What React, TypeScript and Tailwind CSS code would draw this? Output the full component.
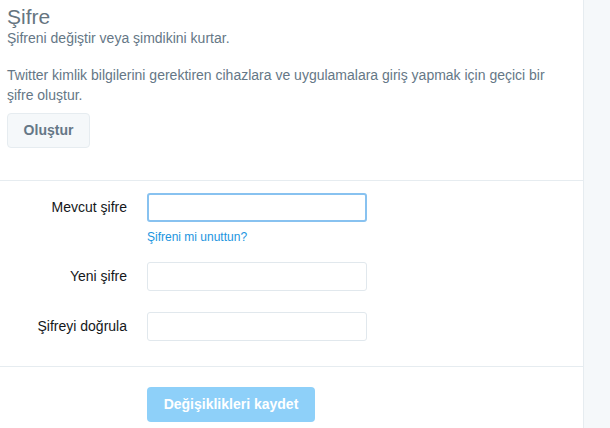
import React from "react";

export default function App() {
  const font = { fontFamily: '"Liberation Sans", Arial, sans-serif' };
  return (
    <div className="flex h-[428px] w-[610px] overflow-hidden bg-white" style={font}>
      <div className="w-[584px] shrink-0 border-r border-[#e6ecf0] bg-white">
        <div className="px-[7px] pt-[5px] pb-[32px]">
          <h1 className="text-[21px] leading-[23px] text-[#66757f]">Şifre</h1>
          <p className="text-[14px] leading-[20px] text-[#657786]">Şifreni değiştir veya şimdikini kurtar.</p>
          <p className="mt-[17px] text-[14px] leading-[20px] text-[#657786] pr-[30px]">
            Twitter kimlik bilgilerini gerektiren cihazlara ve uygulamalara giriş yapmak için geçici bir şifre oluştur.
          </p>
          <button className="mt-[8px] h-[35px] w-[83px] rounded-[4px] border border-[#e6ecf0] bg-[#f5f8fa] text-[14px] font-bold text-[#657786]">
            Oluştur
          </button>
        </div>
        <div className="border-t border-[#e6ecf0] pt-[12px] pb-[25px]">
          <div className="grid grid-cols-[127px_220px] gap-x-[20px]">
            <label className="text-right text-[14px] leading-[29px] text-[#14171a]">Mevcut şifre</label>
            <div>
              <div className="h-[29px] rounded-[3px] border-2 border-[#88c2f0] bg-white" />
              <a className="mt-[6px] block text-[12px] leading-[19px] text-[#1b95e0]">Şifreni mi unuttun?</a>
            </div>
            <label className="mt-[15px] text-right text-[14px] leading-[29px] text-[#14171a]">Yeni şifre</label>
            <div className="mt-[15px] h-[29px] rounded-[3px] border border-[#e1e8ed] bg-white" />
            <label className="mt-[21px] text-right text-[14px] leading-[29px] text-[#14171a]">Şifreyi doğrula</label>
            <div className="mt-[21px] h-[29px] rounded-[3px] border border-[#e1e8ed] bg-white" />
          </div>
        </div>
        <div className="border-t border-[#e6ecf0] pt-[20px] pl-[147px]">
          <button className="h-[35px] w-[168px] rounded-[4px] bg-[#8ed0f9] text-[14px] font-bold text-white">
            Değişiklikleri kaydet
          </button>
        </div>
      </div>
      <div className="flex-1 bg-[#f5f8fa]" />
    </div>
  );
}
